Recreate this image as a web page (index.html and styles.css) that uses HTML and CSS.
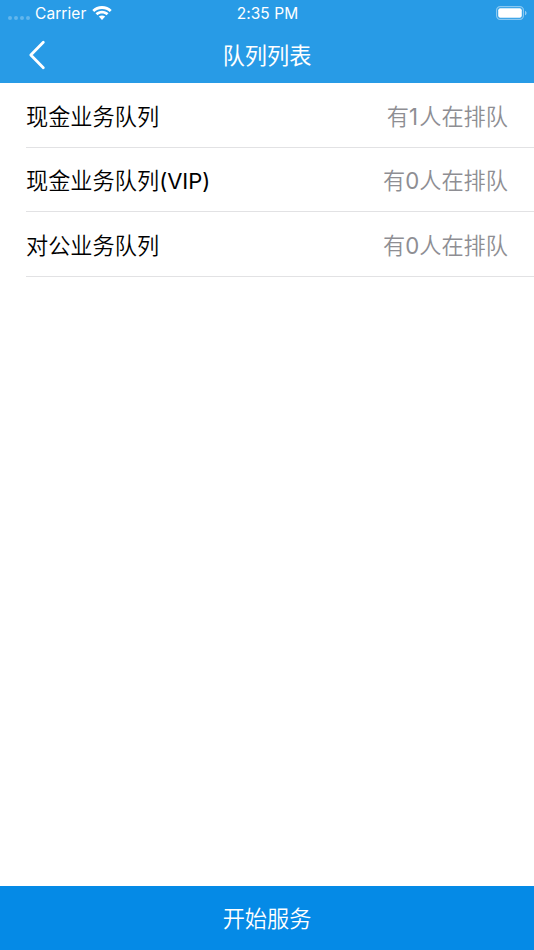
FILE: index.html
```html
<!DOCTYPE html>
<html lang="zh-CN">
<head>
<meta charset="utf-8">
<title>队列列表</title>
<link rel="stylesheet" href="styles.css">
</head>
<body>
<div class="screen">
  <header class="top">
    <div class="status">
      <div class="status-left">
        <span class="dots"><i></i><i></i><i></i><i></i></span>
        <span class="carrier">Carrier</span>
        <svg class="wifi" width="20" height="14" viewBox="0 0 20 14" fill="#fff"><path d="M10 0C6.200 0 2.800 1.500.3 3.900L2.200 5.900C4.300 4 7 2.900 10 2.900s5.700 1.100 7.800 3l1.900-2C17.200 1.500 13.800 0 10 0Z"/><path d="M10 4.700c-2.500 0-4.800 1-6.500 2.500l2 2C6.700 8.200 8.300 7.600 10 7.600s3.300.6 4.500 1.600l2-2C14.800 5.700 12.500 4.700 10 4.700Z"/><path d="M10 9.400c-1.200 0-2.300.4-3.200 1.200L10 13.900l3.200-3.300C12.300 9.800 11.200 9.400 10 9.400Z"/></svg>
      </div>
      <span class="time">2:35 PM</span>
      <svg class="battery" width="31" height="14" viewBox="0 0 31 14"><rect x=".6" y=".6" width="26.800" height="12.800" rx="3.600" fill="none" stroke="#fff" stroke-opacity=".45" stroke-width="1.200"/><rect x="2.200" y="2.200" width="23.600" height="9.600" rx="2" fill="#fff"/><path d="M29 4.700c2 .8 2 3.800 0 4.600Z" fill="#fff" fill-opacity=".5"/></svg>
    </div>
    <div class="nav">
      <svg class="back" width="18" height="30" viewBox="0 0 18 30"><path d="M15.300 2.300 2.800 15l12.500 12.700" fill="none" stroke="#fff" stroke-width="2.800" stroke-linecap="round" stroke-linejoin="round"/></svg>
      <h1>队列列表</h1>
    </div>
  </header>
  <main class="list">
    <div class="row"><span class="name">现金业务队列</span><span class="count">有<span class="latin">1</span>人在排队</span></div>
    <div class="row"><span class="name">现金业务队列<span class="latin vip">(VIP)</span></span><span class="count">有<span class="latin">0</span>人在排队</span></div>
    <div class="row"><span class="name">对公业务队列</span><span class="count">有<span class="latin">0</span>人在排队</span></div>
  </main>
  <button class="start">开始服务</button>
</div>
</body>
</html>
```
FILE: styles.css
```css
* { box-sizing: border-box; }
body { margin: 0; font-family: Inter, "Noto Sans CJK SC", sans-serif; font-size: 22.2px; font-weight: 350; color: #000; background: #fff; }
.screen { height: 950px; display: flex; flex-direction: column; }
.top { height: 83px; background: #289be6; color: #fff; }
.status { height: 26px; display: grid; grid-template-columns: 1fr auto 1fr; align-items: center; padding: 0 7px 0 8px; font-size: 15.5px; font-weight: 400; line-height: 26px; }
.carrier, .time { padding-top: 1px; line-height: 25px; letter-spacing: .08px; }
.status-left { display: flex; align-items: center; }
.dots { display: flex; gap: 2px; margin: 9px 5px 0 0; }
.dots i { width: 4px; height: 4px; border-radius: 50%; background: #fff; opacity: .27; }
.wifi { margin-left: 5.5px; }
.battery { justify-self: end; }
.nav { height: 57px; display: grid; grid-template-columns: 1fr auto 1fr; align-items: center; padding: 0 28px; }
.nav h1 { margin: 0; padding-top: 2px; font-size: 22.2px; font-weight: 400; line-height: 32px; }
.list { flex: 1; padding-left: 26px; }
.row { height: 65px; display: flex; align-items: center; justify-content: space-between; padding: 3px 26px 0 0; border-bottom: 1px solid #e2e2e4; line-height: 32px; }
.row:nth-child(2) { height: 64px; padding-top: 2px; }
.vip { font-size: 22px; font-weight: 370; }
.count { color: #8e8e93; }
.count .latin { font-weight: 375; }
.row:first-child .latin { letter-spacing: 1.3px; }
.start { height: 63.6px; border: 0; padding: 0 0 2px; background: #058ae6; color: #fff; font: inherit; }
```
